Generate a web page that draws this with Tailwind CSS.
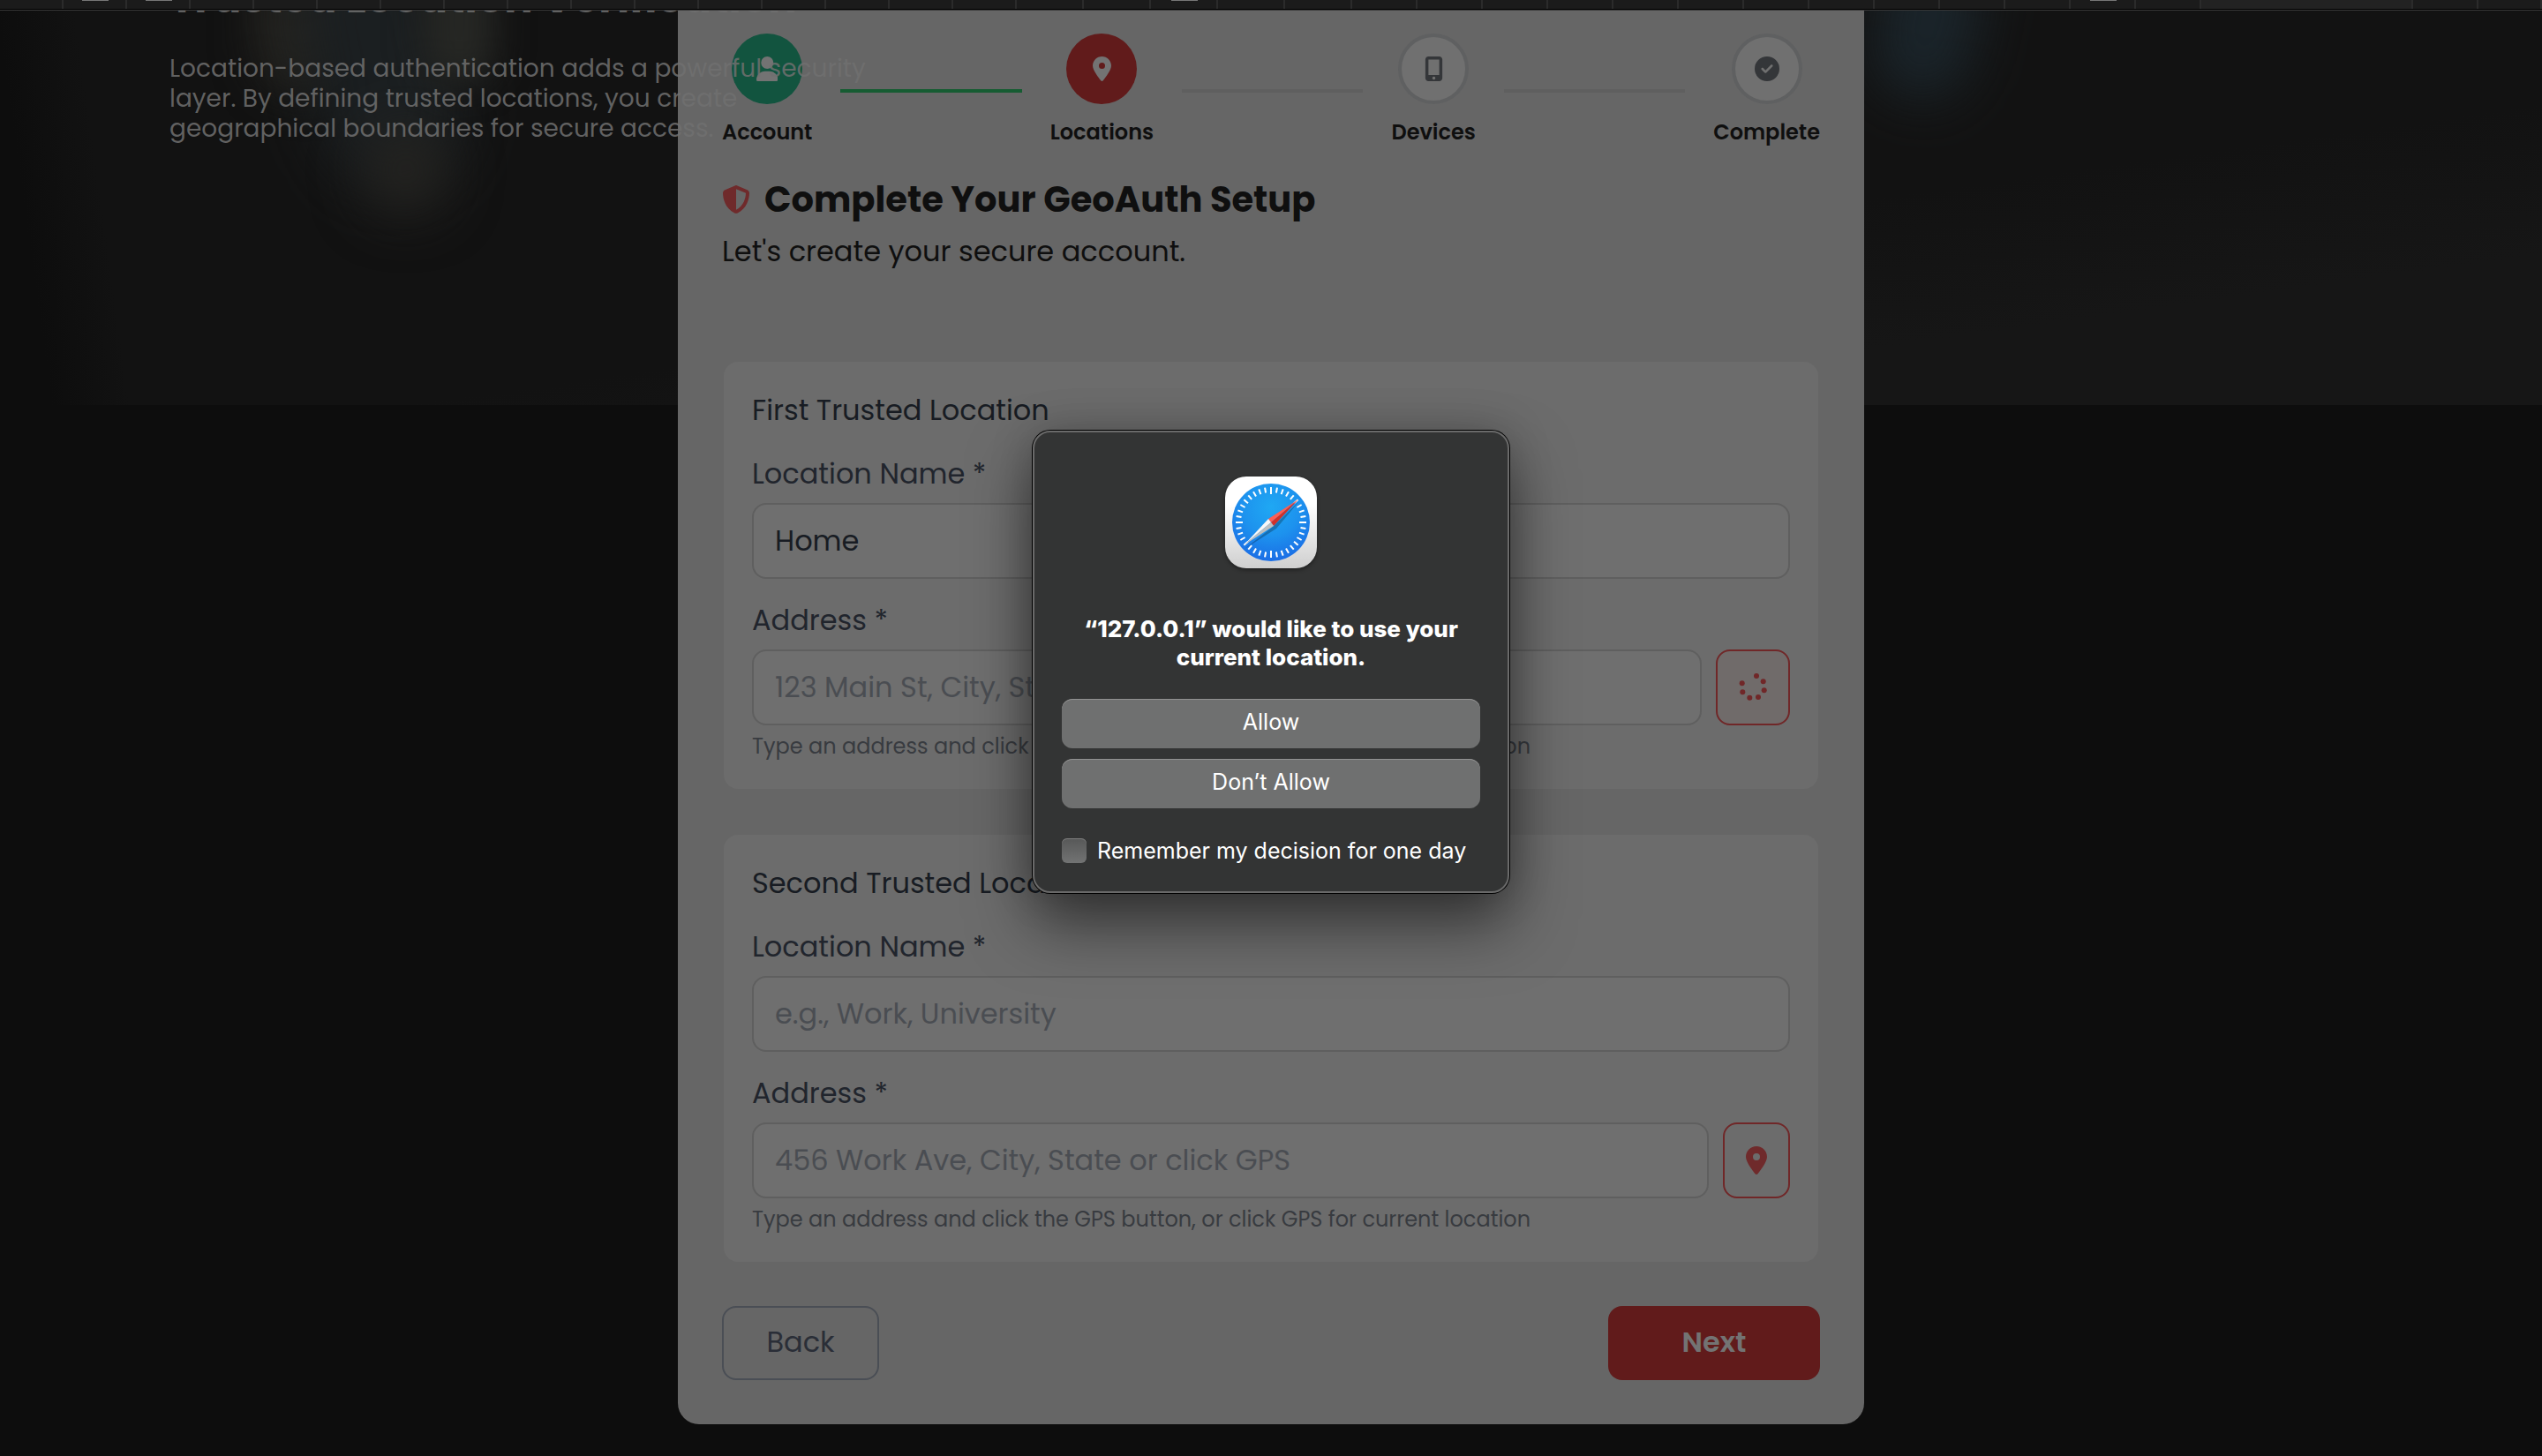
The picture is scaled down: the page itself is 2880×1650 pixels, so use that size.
<!DOCTYPE html>
<html lang="en">
<head>
<meta charset="utf-8">
<meta name="viewport" content="width=device-width, initial-scale=1">
<title>GeoAuth Setup</title>
<script src="https://cdn.jsdelivr.net/npm/@tailwindcss/browser@4"></script>
</head>
<body class="min-h-screen bg-[#0d0d0d] font-['Poppins','Inter',sans-serif] text-[#0f0f0f]">

<!-- Browser tab strip -->
<nav aria-label="Tabs" id="tabs" class="flex h-3 border-b border-[#3a3a3a] bg-[#1b1b1b] shadow-[inset_0_-1px_0_#000]"></nav>

<div class="relative overflow-hidden">
  <!-- Blurred hero backdrop -->
  <div class="absolute inset-x-0 top-0 h-[447px] overflow-hidden bg-[#121212]" aria-hidden="true">
    <div class="absolute inset-0 bg-linear-[172deg,transparent_60%,#161616_80%]"></div>
    <div class="absolute inset-0 bg-linear-[82deg,#0d0d0d_2%,#121212_5%,transparent_6%]"></div>
    <div class="absolute -top-24 left-[290px] h-[190px] w-[110px] rounded-full bg-[#24231f] blur-[24px]"></div>
    <div class="absolute -top-24 left-[350px] h-[300px] w-[160px] -rotate-12 rounded-full bg-[#1b1f21] blur-[32px]"></div>
    <div class="absolute -top-24 left-[480px] h-[180px] w-[80px] rounded-full bg-[#262724] blur-[20px]"></div>
    <div class="absolute top-[130px] left-[415px] h-[100px] w-[90px] rounded-full bg-[#242320] blur-[30px]"></div>
    <div class="absolute -top-20 left-[2130px] h-[180px] w-[110px] rotate-12 rounded-full bg-[#1a242a] blur-[30px]"></div>
  </div>

  <main class="relative mx-auto max-w-[1344px] rounded-b-3xl bg-[#666666] px-[50px] pt-[26px] pb-[50px]">
    <ol class="flex items-center text-2xl leading-9 font-semibold">
      <li class="flex flex-col items-center gap-[14px]">
        <span class="flex size-20 items-center justify-center rounded-full bg-[#12543f]">
          <svg class="h-7 fill-[#737373]" viewBox="0 0 448 512"><path d="M224 256A128 128 0 1 0 224 0a128 128 0 1 0 0 256zm-45.700 48C79.800 304 0 383.800 0 482.300C0 498.700 13.300 512 29.700 512H418.300c16.400 0 29.700-13.300 29.700-29.700C448 383.800 368.200 304 269.700 304H178.300z"/></svg>
        </span>
        Account
      </li>
      <li class="mx-8 h-1 flex-1 bg-[#165c32]" aria-hidden="true"></li>
      <li class="flex flex-col items-center gap-[14px]" aria-current="step">
        <span class="flex size-20 items-center justify-center rounded-full bg-[#611b1b]">
          <svg class="h-7 fill-[#737373]" viewBox="0 0 384 512"><path d="M215.700 499.200C267 435 384 279.400 384 192C384 86 298 0 192 0S0 86 0 192c0 87.400 117 243 168.300 307.200c12.300 15.300 35.100 15.300 47.400 0zM192 128a64 64 0 1 1 0 128 64 64 0 1 1 0-128z"/></svg>
        </span>
        Locations
      </li>
      <li class="mx-8 h-1 flex-1 bg-[#5f5f5f]" aria-hidden="true"></li>
      <li class="flex flex-col items-center gap-[14px]">
        <span class="flex size-20 items-center justify-center rounded-full border-4 border-[#5f6061] bg-[#707070]">
          <svg class="h-7 fill-[#343639]" viewBox="0 0 384 512"><path d="M16 64C16 28.700 44.700 0 80 0H304c35.300 0 64 28.700 64 64V448c0 35.300-28.700 64-64 64H80c-35.300 0-64-28.700-64-64V64zM224 448a32 32 0 1 0 -64 0 32 32 0 1 0 64 0zM304 64H80V384H304V64z"/></svg>
        </span>
        Devices
      </li>
      <li class="mx-8 h-1 flex-1 bg-[#5f5f5f]" aria-hidden="true"></li>
      <li class="flex flex-col items-center gap-[14px]">
        <span class="flex size-20 items-center justify-center rounded-full border-4 border-[#5f6061] bg-[#707070]">
          <svg class="h-7 fill-[#343639]" viewBox="0 0 512 512"><path d="M256 512A256 256 0 1 0 256 0a256 256 0 1 0 0 512zM369 209L241 337c-9.400 9.400-24.600 9.400-33.900 0l-64-64c-9.400-9.400-9.400-24.600 0-33.900s24.600-9.400 33.900 0l47 47L335 175c9.400-9.400 24.600-9.400 33.900 0s9.400 24.600 0 33.900z"/></svg>
        </span>
        Complete
      </li>
    </ol>

    <h1 class="mt-7 flex items-center gap-4 text-[40px] leading-[60px] font-bold">
      <svg class="size-8 fill-[#6f2a2b]" viewBox="0 0 512 512"><path d="M256 0c4.600 0 9.200 1 13.400 2.900L457.700 82.800c22 9.300 38.400 31 38.300 57.200c-.5 99.200-41.300 280.700-213.600 363.200c-16.700 8-36.100 8-52.800 0C57.300 420.700 16.500 239.200 16 140c-.1-26.200 16.300-47.900 38.300-57.200L242.700 2.900C246.800 1 251.400 0 256 0zm0 66.800V444.800C394 378 431.100 230.100 432 141.400L256 66.800z"/></svg>
      Complete Your GeoAuth Setup
    </h1>
    <p class="mt-[5px] text-[32px] leading-[48px]">Let's create your secure account.</p>

    <form class="mt-[101px]" onsubmit="return false">
      <section class="mx-0.5 rounded-2xl bg-[#6c6c6c] px-8 pt-[31px] pb-[30px] text-[32px] leading-[48px] text-[#21252d]">
        <h2 class="text-[#181c23]">First Trusted Location</h2>
        <label for="name1" class="mt-6 block">Location Name *</label>
        <input id="name1" type="text" value="Home" class="mt-[9px] block h-[86px] w-full rounded-2xl border-2 border-[#5f5f5f] bg-[#6f6f6f] px-6 text-[#181c23]">
        <label for="addr1" class="mt-[23px] block">Address *</label>
        <div class="mt-[9px] flex gap-4">
          <input id="addr1" type="text" placeholder="123 Main St, City, State or click GPS" class="h-[86px] min-w-0 flex-1 rounded-2xl border-2 border-[#5f5f5f] bg-[#6f6f6f] px-6 placeholder:text-[#4a4d52]">
          <button type="button" aria-label="Locating" class="flex w-[84px] items-center justify-center rounded-2xl border-2 border-[#702728] bg-[#706b6a]">
            <svg class="size-8 fill-[#702728]" viewBox="0 0 32 32"><circle cx="20" cy="3" r="3"/><circle cx="27.700" cy="9.300" r="3"/><circle cx="28.700" cy="19.300" r="3"/><circle cx="22" cy="27" r="3"/><circle cx="12.300" cy="27.700" r="3"/><circle cx="4.300" cy="21.300" r="3"/><circle cx="3.700" cy="11.300" r="3"/></svg>
          </button>
        </div>
        <p class="mt-1.5 text-2xl leading-9 text-[#383b40]">Type an address and click the GPS button, or click GPS for current location</p>
      </section>

      <section class="mx-0.5 mt-[52px] rounded-2xl bg-[#6c6c6c] px-8 pt-[31px] pb-[30px] text-[32px] leading-[48px] text-[#21252d]">
        <h2 class="text-[#181c23]">Second Trusted Location</h2>
        <label for="name2" class="mt-6 block">Location Name *</label>
        <input id="name2" type="text" placeholder="e.g., Work, University" class="mt-[9px] block h-[86px] w-full rounded-2xl border-2 border-[#5f5f5f] bg-[#6f6f6f] px-6 placeholder:text-[#4a4d52]">
        <label for="addr2" class="mt-[23px] block">Address *</label>
        <div class="mt-[9px] flex gap-4">
          <input id="addr2" type="text" placeholder="456 Work Ave, City, State or click GPS" class="h-[86px] min-w-0 flex-1 rounded-2xl border-2 border-[#5f5f5f] bg-[#6f6f6f] px-6 placeholder:text-[#4a4d52]">
          <button type="button" aria-label="Use current location" class="flex w-[76px] items-center justify-center rounded-2xl border-2 border-[#702728]">
            <svg class="h-8 fill-[#6f2a2b]" viewBox="0 0 384 512"><path d="M215.700 499.200C267 435 384 279.400 384 192C384 86 298 0 192 0S0 86 0 192c0 87.400 117 243 168.300 307.200c12.300 15.300 35.100 15.300 47.400 0zM192 128a64 64 0 1 1 0 128 64 64 0 1 1 0-128z"/></svg>
          </button>
        </div>
        <p class="mt-1.5 text-2xl leading-9 text-[#383b40]">Type an address and click the GPS button, or click GPS for current location</p>
      </section>

      <div class="mt-[50px] flex justify-between text-[32px] leading-[48px]">
        <button type="button" class="h-[84px] w-[178px] rounded-2xl border-2 border-[#4a4e55] pb-0.5 text-[#2a2e37]">Back</button>
        <button type="submit" class="h-[84px] w-60 rounded-2xl bg-[#611b1b] pb-0.5 font-semibold text-[#737373]">Next</button>
      </div>
    </form>
  </main>

  <!-- Hero copy, sliding over the card -->
  <div class="pointer-events-none absolute -top-[50px] left-48 w-[800px] text-[#707070]/85">
    <h2 class="text-5xl leading-[72px] font-bold">Trusted Location Verification</h2>
    <p class="mt-[27px] text-[28px] leading-[34px]">Location-based authentication adds a powerful security<br>layer. By defining trusted locations, you create<br>geographical boundaries for secure access.</p>
  </div>
</div>

<!-- Location permission dialog -->
<div role="dialog" aria-labelledby="ask" class="absolute top-[488px] left-1/2 flex w-[540px] -translate-x-1/2 flex-col items-center rounded-[20px] border-2 border-[#6a6a6a] bg-[#333434] px-[31px] pt-[50px] pb-[30px] font-['Inter',sans-serif] text-[25px] text-white shadow-[0_0_0_1px_#000,0_36px_70px_rgba(0,0,0,0.5),0_0_50px_rgba(0,0,0,0.2)]">
  <svg class="size-[104px] drop-shadow-[0_2px_2px_rgba(0,0,0,0.4)]" viewBox="0 0 104 104">
    <defs>
      <linearGradient id="plate" x1="0" y1="0" x2="0" y2="1"><stop offset=".3" stop-color="#fff"/><stop offset="1" stop-color="#cfcfcf"/></linearGradient>
      <radialGradient id="dial" cx=".5" cy=".3" r=".75"><stop offset="0" stop-color="#1fa8f3"/><stop offset=".5" stop-color="#1d92ee"/><stop offset="1" stop-color="#1a68e4"/></radialGradient>
    </defs>
    <rect width="104" height="104" rx="24" fill="url(#plate)"/>
    <circle cx="52" cy="52" r="44" fill="url(#dial)"/>
    <g id="ticks" stroke="#fff" stroke-width="2"></g>
    <path d="M84 28 58 59 22 82 54 57z" fill="#000" opacity=".25"/>
    <path d="M83 26 49 48 52 52z" fill="#ff5e54"/>
    <path d="M83 26 55 56 52 52z" fill="#d03029"/>
    <path d="M21 78 49 48 52 52z" fill="#f7f7f7"/>
    <path d="M21 78 55 56 52 52z" fill="#bdbfc0"/>
  </svg>
  <p id="ask" class="mt-[53px] text-center text-[26px] leading-8 font-extrabold">“127.0.0.1” would like to use your<br>current location.</p>
  <button type="button" class="mt-[31px] h-14 w-full rounded-xl bg-[#6f7070] pb-0.5 shadow-[inset_0_1px_0_#929292]">Allow</button>
  <button type="button" class="mt-3 h-14 w-full rounded-xl bg-[#6f7070] pb-0.5 shadow-[inset_0_1px_0_#929292]">Don’t Allow</button>
  <label class="mt-8 flex items-center gap-3 self-start leading-8 whitespace-nowrap">
    <input type="checkbox" class="size-7 appearance-none rounded-md bg-linear-to-b from-[#575858] to-[#727373] shadow-[inset_0_1px_0_#7d7d7d]">
    Remember my decision for one day
  </label>
</div>

<script>
  // Tabs: relative widths, the active tab, and which ones show an icon edge
  const widths = [...Array(16).fill(72), ...Array(5).fill(76), ...Array(13).fill(74), 240, 74, 72];
  const marked = [1, 2, 18, 32];
  document.getElementById('tabs').innerHTML = widths.map((w, i) =>
    `<a href="#" aria-label="Tab ${i + 1}" style="flex:${w} 1 0" class="mb-px flex justify-center shadow-[inset_-2px_0_0_#2b2b2b] ${w === 240 ? 'bg-[#222222]' : ''}">${marked.includes(i) ? '<span class="h-px w-[30px] bg-[#777777]"></span>' : ''}</a>`).join('');

  // Compass ticks
  document.getElementById('ticks').innerHTML = Array.from({ length: 36 }, (_, i) =>
    `<line x1="52" x2="52" y1="12" y2="${i % 9 === 0 ? 20 : 18}" transform="rotate(${i * 10} 52 52)"/>`).join('');
</script>
</body>
</html>
